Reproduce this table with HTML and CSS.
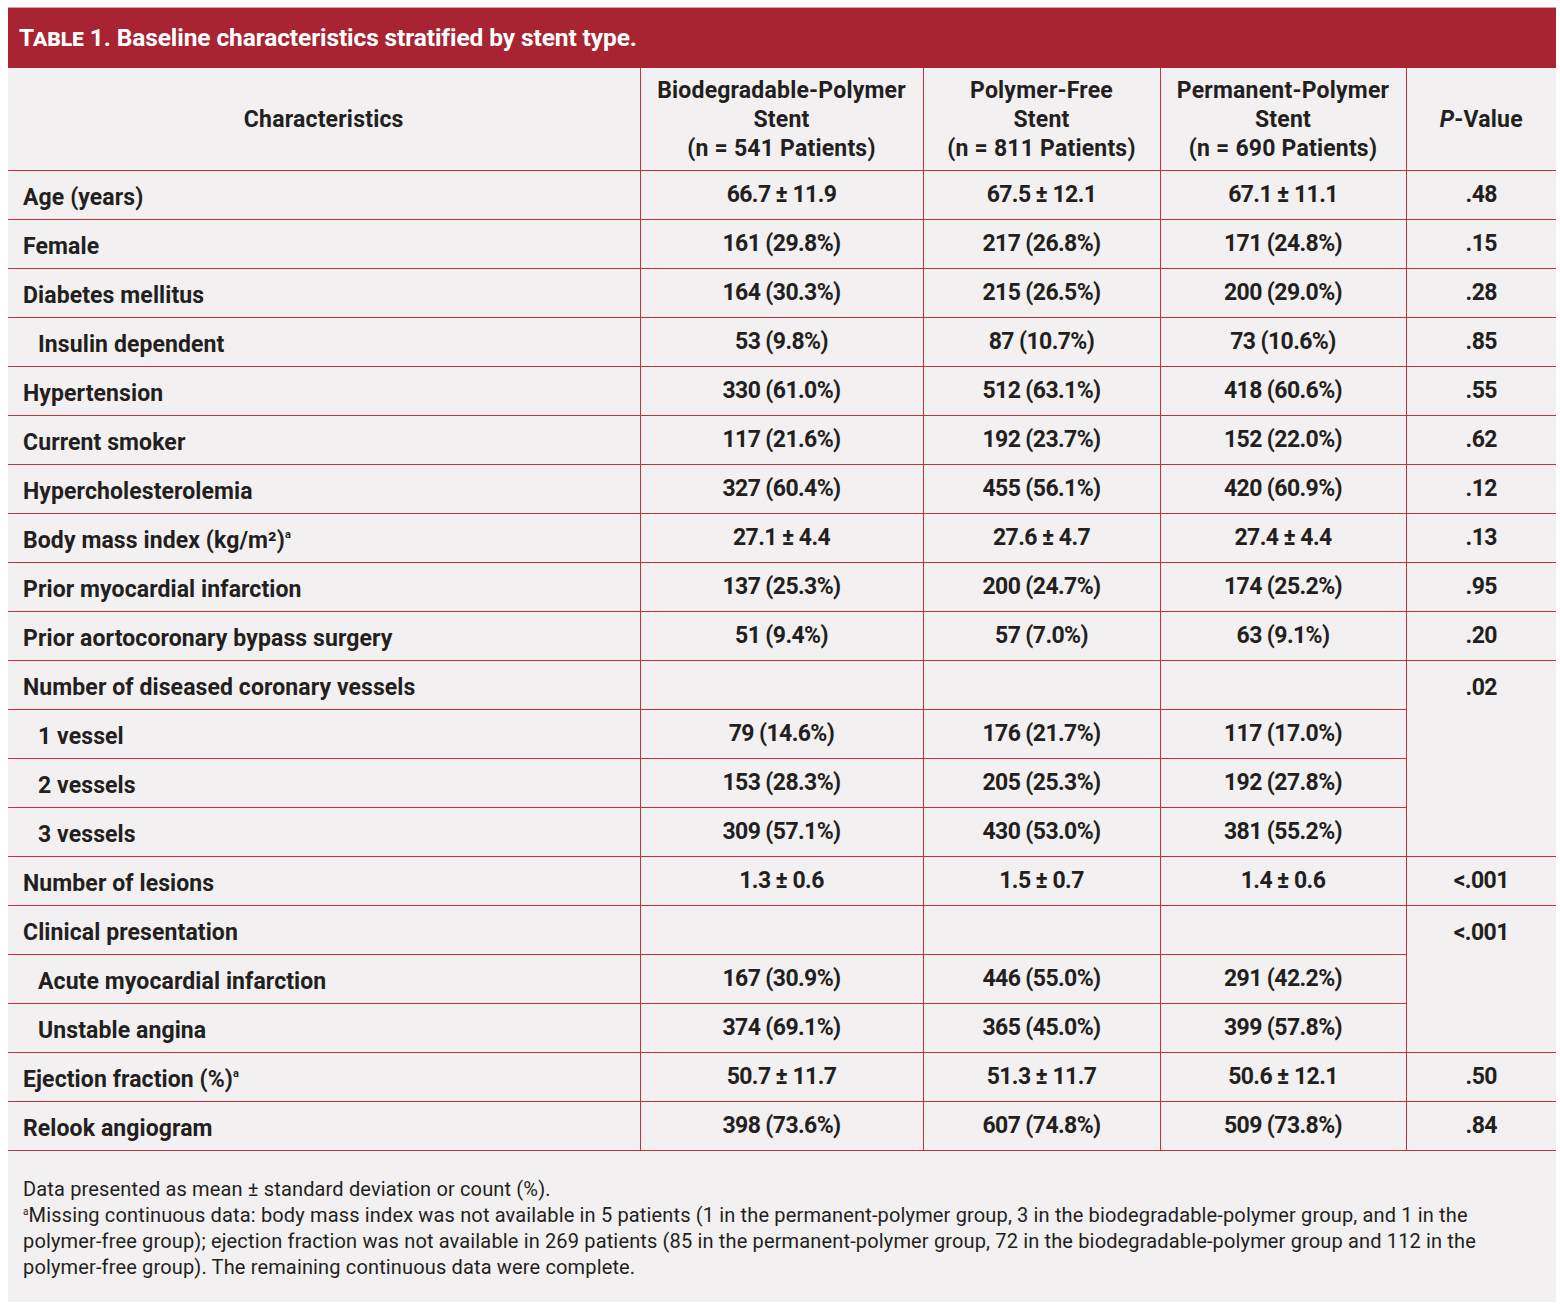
FILE: index.html
```html
<!DOCTYPE html>
<html lang="en">
<head>
<meta charset="utf-8">
<title>Table 1</title>
<link rel="stylesheet" href="styles.css">
</head>
<body>
<div class="panel">
  <div class="title"><span class="sc">Table 1.</span> Baseline characteristics stratified by stent type.</div>
  <table class="data">
    <colgroup>
      <col class="c1"><col class="c2"><col class="c3"><col class="c4"><col class="c5">
    </colgroup>
    <thead>
      <tr>
        <th>Characteristics</th>
        <th>Biodegradable-Polymer<br>Stent<br>(n = 541 Patients)</th>
        <th>Polymer-Free<br>Stent<br>(n = 811 Patients)</th>
        <th>Permanent-Polymer<br>Stent<br>(n = 690 Patients)</th>
        <th><i>P</i>-Value</th>
      </tr>
    </thead>
    <tbody>
      <tr><td class="lbl">Age (years)</td><td>66.7 ± 11.9</td><td>67.5 ± 12.1</td><td>67.1 ± 11.1</td><td>.48</td></tr>
      <tr><td class="lbl">Female</td><td>161 (29.8%)</td><td>217 (26.8%)</td><td>171 (24.8%)</td><td>.15</td></tr>
      <tr><td class="lbl">Diabetes mellitus</td><td>164 (30.3%)</td><td>215 (26.5%)</td><td>200 (29.0%)</td><td>.28</td></tr>
      <tr><td class="lbl sub">Insulin dependent</td><td>53 (9.8%)</td><td>87 (10.7%)</td><td>73 (10.6%)</td><td>.85</td></tr>
      <tr><td class="lbl">Hypertension</td><td>330 (61.0%)</td><td>512 (63.1%)</td><td>418 (60.6%)</td><td>.55</td></tr>
      <tr><td class="lbl">Current smoker</td><td>117 (21.6%)</td><td>192 (23.7%)</td><td>152 (22.0%)</td><td>.62</td></tr>
      <tr><td class="lbl">Hypercholesterolemia</td><td>327 (60.4%)</td><td>455 (56.1%)</td><td>420 (60.9%)</td><td>.12</td></tr>
      <tr><td class="lbl">Body mass index (kg/m²)<sup>a</sup></td><td>27.1 ± 4.4</td><td>27.6 ± 4.7</td><td>27.4 ± 4.4</td><td>.13</td></tr>
      <tr><td class="lbl">Prior myocardial infarction</td><td>137 (25.3%)</td><td>200 (24.7%)</td><td>174 (25.2%)</td><td>.95</td></tr>
      <tr><td class="lbl">Prior aortocoronary bypass surgery</td><td>51 (9.4%)</td><td>57 (7.0%)</td><td>63 (9.1%)</td><td>.20</td></tr>
      <tr><td class="lbl">Number of diseased coronary vessels</td><td></td><td></td><td></td><td class="span" rowspan="4">.02</td></tr>
      <tr><td class="lbl sub">1 vessel</td><td>79 (14.6%)</td><td>176 (21.7%)</td><td>117 (17.0%)</td></tr>
      <tr><td class="lbl sub">2 vessels</td><td>153 (28.3%)</td><td>205 (25.3%)</td><td>192 (27.8%)</td></tr>
      <tr><td class="lbl sub">3 vessels</td><td>309 (57.1%)</td><td>430 (53.0%)</td><td>381 (55.2%)</td></tr>
      <tr><td class="lbl">Number of lesions</td><td>1.3 ± 0.6</td><td>1.5 ± 0.7</td><td>1.4 ± 0.6</td><td>&lt;.001</td></tr>
      <tr><td class="lbl">Clinical presentation</td><td></td><td></td><td></td><td class="span" rowspan="3">&lt;.001</td></tr>
      <tr><td class="lbl sub">Acute myocardial infarction</td><td>167 (30.9%)</td><td>446 (55.0%)</td><td>291 (42.2%)</td></tr>
      <tr><td class="lbl sub">Unstable angina</td><td>374 (69.1%)</td><td>365 (45.0%)</td><td>399 (57.8%)</td></tr>
      <tr><td class="lbl">Ejection fraction (%)<sup>a</sup></td><td>50.7 ± 11.7</td><td>51.3 ± 11.7</td><td>50.6 ± 12.1</td><td>.50</td></tr>
      <tr><td class="lbl">Relook angiogram</td><td>398 (73.6%)</td><td>607 (74.8%)</td><td>509 (73.8%)</td><td>.84</td></tr>
    </tbody>
  </table>
  <div class="notes">
    <p>Data presented as mean ± standard deviation or count (%).</p>
    <p><sup>a</sup>Missing continuous data: body mass index was not available in 5 patients (1 in the permanent-polymer group, 3 in the biodegradable-polymer group, and 1 in the polymer-free group); ejection fraction was not available in 269 patients (85 in the permanent-polymer group, 72 in the biodegradable-polymer group and 112 in the polymer-free group). The remaining continuous data were complete.</p>
  </div>
</div>
</body>
</html>
```

FILE: styles.css
```css
html, body {
  margin: 0;
  padding: 0;
  background: #ffffff;
}

body {
  font-family: Roboto, "Liberation Sans", sans-serif;
  color: #231f20;
}

.panel {
  margin: 7px 4px 7px 8px;
  width: 1548px;
  background: #f2f0f1;
}

.title {
  background: #a82432;
  color: #ffffff;
  height: 61px;
  box-sizing: border-box;
  padding: 15px 0 0 11px;
  font-size: 24.5px;
  font-weight: bold;
  line-height: 30px;
  letter-spacing: -0.1px;
  border-top: 1px solid #d7a3a8;
}

.sc {
  font-variant: small-caps;
}

table.data {
  width: 100%;
  border-collapse: collapse;
  table-layout: fixed;
}

col.c1 { width: 632px; }
col.c2 { width: 283px; }
col.c3 { width: 237px; }
col.c4 { width: 246px; }
col.c5 { width: 150px; }

table.data th,
table.data td {
  border: 1.5px solid #c4323f;
  font-size: 23px;
  font-weight: bold;
  text-align: center;
  vertical-align: middle;
  padding: 0;
  height: 49px;
  box-sizing: border-box;
  letter-spacing: -0.6px;
}

table.data tr > :first-child { border-left: none; }
table.data tr > :last-child { border-right: none; }
table.data thead th { border-top: none; }

table.data th {
  height: 102px;
  line-height: 29px;
  padding-top: 2px;
  letter-spacing: 0.2px;
}

table.data td.lbl {
  text-align: left;
  padding: 5px 0 0 15px;
  letter-spacing: 0.1px;
}

table.data td.sub {
  padding-left: 30px;
}

table.data td.span {
  vertical-align: top;
  padding-top: 13px;
  border-right: none;
}

sup {
  font-size: 11px;
  vertical-align: 10px;
  line-height: 0;
}

.notes {
  padding: 25px 60px 22px 15px;
  font-size: 20px;
  letter-spacing: 0.15px;
  line-height: 26px;
}

.notes p {
  margin: 0;
}

.notes sup {
  font-size: 10px;
  vertical-align: 7px;
}
```
